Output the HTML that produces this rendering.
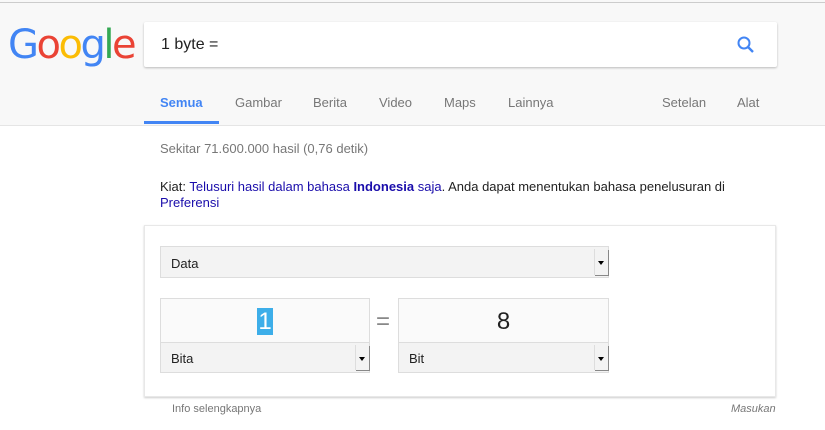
<!DOCTYPE html>
<html><head><style>
body{margin:0;width:825px;height:430px;background:#fff;font-family:"Liberation Sans",Arial,sans-serif;position:relative;overflow:hidden}
.hdr{position:absolute;left:0;top:0;width:825px;height:125px;background:#f8f8f8;border-bottom:1px solid #e5e5e5}
.topline{position:absolute;left:0;top:2px;width:825px;height:1px;background:#ccc}
.logo{position:absolute;left:8px;top:22px;font-size:40px;letter-spacing:-2.5px;font-family:"DejaVu Sans",sans-serif}
.sb{position:absolute;left:144px;top:22px;width:633px;height:45px;background:#fff;box-shadow:0 1px 2px rgba(0,0,0,.25);border-radius:2px}
.sb span{position:absolute;left:17px;top:14px;font-size:16px;color:#222}
.tab{position:absolute;top:95px;font-size:13px;color:#777}
.res{position:absolute;font-size:13px;color:#777}
.card{position:absolute;left:144px;top:225px;width:632px;height:172px;background:#fff;box-shadow:0 1px 2px rgba(0,0,0,.2);border:1px solid #e8e8e8;box-sizing:border-box}
.sel{position:absolute;background:#f3f3f3;border:1px solid #ddd;box-sizing:border-box;font-size:13px;color:#222}
.arr{position:absolute;right:0;top:2px;width:13px;bottom:2px;background:#f3f3f3;border-left:1px solid #ddd;box-shadow:1px 1px 0 #888}
.arr:after{content:"";position:absolute;left:3px;top:50%;margin-top:-1px;border:3px solid transparent;border-top:4px solid #000}
.inp{position:absolute;background:#fafafa;border:1px solid #ddd;box-sizing:border-box;font-size:24px;text-align:center;color:#222}
</style></head><body>
<div class="hdr"></div>
<div class="topline"></div>
<div class="logo"><span style="color:#4285f4">G</span><span style="color:#ea4335">o</span><span style="color:#fbbc05">o</span><span style="color:#4285f4">g</span><span style="color:#34a853">l</span><span style="color:#ea4335">e</span></div>
<div class="sb"><span>1 byte =</span>
<svg style="position:absolute;left:592px;top:13px" width="20" height="20" viewBox="0 0 20 20"><circle cx="8" cy="8" r="5.5" fill="none" stroke="#4285f4" stroke-width="2"/><path d="M12 12l5 5" stroke="#4285f4" stroke-width="2.4"/></svg></div>
<div class="tab" style="left:160px;color:#4285f4;font-weight:bold">Semua</div>
<div style="position:absolute;left:144px;top:121px;width:75px;height:3px;background:#4285f4"></div>
<div class="tab" style="left:235px">Gambar</div>
<div class="tab" style="left:313px">Berita</div>
<div class="tab" style="left:379px">Video</div>
<div class="tab" style="left:444px">Maps</div>
<div class="tab" style="left:508px">Lainnya</div>
<div class="tab" style="left:662px">Setelan</div>
<div class="tab" style="left:737px">Alat</div>
<div class="res" style="left:160px;top:141px">Sekitar 71.600.000 hasil (0,76 detik)</div>
<div class="res" style="left:160px;top:179px;color:#222;line-height:16px;width:600px">Kiat: <span style="color:#1a0dab">Telusuri hasil dalam bahasa <b>Indonesia</b> saja</span>. Anda dapat menentukan bahasa penelusuran di <span style="color:#1a0dab">Preferensi</span></div>
<div class="card"></div>
<div class="sel" style="left:160px;top:246px;width:449px;height:32px"><span style="position:absolute;left:10px;top:9px">Data</span><div class="arr"></div></div>
<div class="inp" style="left:160px;top:298px;width:210px;height:45px"><span style="position:relative;top:9px;background:#3daee9;color:#fff;padding:0 1px">1</span></div>
<div class="sel" style="left:160px;top:342px;width:210px;height:31px"><span style="position:absolute;left:10px;top:8px">Bita</span><div class="arr"></div></div>
<div style="position:absolute;left:376px;top:308px;font-size:24px;color:#888">=</div>
<div class="inp" style="left:398px;top:298px;width:211px;height:45px"><span style="position:relative;top:9px">8</span></div>
<div class="sel" style="left:398px;top:342px;width:211px;height:31px"><span style="position:absolute;left:10px;top:8px">Bit</span><div class="arr"></div></div>
<div style="position:absolute;left:172px;top:403px;font-size:11px;color:#777">Info selengkapnya</div>
<div style="position:absolute;left:731px;top:403px;font-size:11px;color:#777;font-style:italic">Masukan</div>
</body></html>
